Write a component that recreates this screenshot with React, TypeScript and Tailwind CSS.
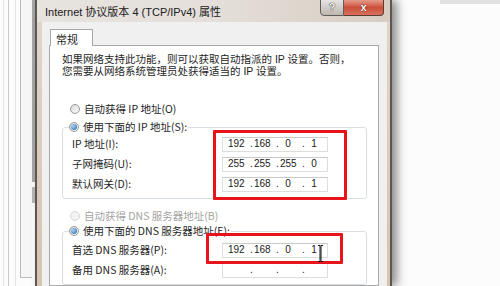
import { Fragment } from "react";

const cjk = "font-['Noto_Sans_CJK_SC',sans-serif]";

function Radio({ checked = false, disabled = false }: { checked?: boolean; disabled?: boolean }) {
  return (
    <span
      className={
        disabled
          ? "w-[10px] h-[10px] rounded-full border border-[#d6d6d6] bg-[#f3f3f3] shrink-0 flex items-center justify-center"
          : "w-[10px] h-[10px] rounded-full border border-[#979797] bg-gradient-to-br from-[#d9d9d9] to-[#fbfbfb] shrink-0 flex items-center justify-center"
      }
    >
      {checked && <span className="w-[6px] h-[6px] rounded-full bg-[radial-gradient(circle_at_35%_35%,#a8d6f7,#1d5ea8)]" />}
    </span>
  );
}

function RadioLabel({ text, checked, disabled }: { text: string; checked?: boolean; disabled?: boolean }) {
  return (
    <div className="h-[14px] flex items-center gap-[4px]">
      <Radio checked={checked} disabled={disabled} />
      <span className={disabled ? "text-[#a3a3a3] whitespace-nowrap" : "whitespace-nowrap"}>{text}</span>
    </div>
  );
}

function IpField({ parts }: { parts: string[] | null }) {
  return (
    <div className="w-[106px] h-[15px] border border-[#dedede] border-t-[#cacaca] bg-white flex items-center pl-[5px] font-['Liberation_Sans',sans-serif] text-[10px] leading-none text-[#222]">
      {[0, 1, 2, 3].map((i) => (
        <Fragment key={i}>
          {i > 0 && <span className="w-[5px] ml-[5px] text-center">.</span>}
          <span className="w-[16px] text-center">{parts ? parts[i] : ""}</span>
        </Fragment>
      ))}
    </div>
  );
}

function Row({ label, parts }: { label: string; parts: string[] | null }) {
  return (
    <div className="h-[20px] flex items-center">
      <span className="w-[150px] whitespace-nowrap">{label}</span>
      <IpField parts={parts} />
    </div>
  );
}

export default function App() {
  return (
    <div className={`w-[500px] h-[286px] overflow-hidden bg-[#fcfcfc] flex relative ${cjk} text-[10.5px] leading-none text-[#1e1e1e]`}>
      {/* window behind, on the left */}
      <div className="w-[35px] h-full flex shrink-0">
        <div className="w-[3px]" />
        <div className="w-[5px] border-l border-[#e3e3e3]" />
        <div className="w-[7px] border-l border-[#c8c8c8]" />
        <div className="w-[5px] border-l border-[#e4e4e4]" />
        <div className="w-[12px] h-[278px] border-l border-b border-[#bcbcbc] bg-[#f6f6f6]" />
        <div className="w-[3px] flex flex-col">
          <div className="h-[182px] bg-[#a9a9a9]" />
          <div className="h-[5px]" />
          <div className="h-[16px] bg-[#b9b9b9]" />
        </div>
      </div>

      {/* dialog */}
      <div className="w-[357px] h-full shrink-0 flex flex-col overflow-hidden border-x-2 border-[#5c5752] bg-gradient-to-b from-[#e0d6cc] to-[#d6c3b0] pl-[5px] pr-[5px] shadow-[5px_0_9px_rgba(0,0,0,0.45)] relative z-10">
        <div className="h-[25px] -ml-[5px] -mr-[5px] flex items-start bg-gradient-to-r from-[#e7e3df] via-[#e4dfda] to-[#d8ccc0]">
          <span className="pl-[8px] pt-[7px] font-['Liberation_Sans','Noto_Sans_CJK_SC',sans-serif] text-[11px] text-[#202020] whitespace-nowrap">
            Internet 协议版本 4 (TCP/IPv4) 属性
          </span>
          <div className="ml-auto mr-[6px] -mt-[1px] flex">
            <div className="w-[24px] h-[17px] rounded-bl-[4px] border border-[#5d5d5d] bg-gradient-to-b from-[#e6e3e0] to-[#bfb7b0] flex items-center justify-center font-['Liberation_Sans',sans-serif] text-[11px] font-bold text-[#f4f4f4] [text-shadow:0_0_1px_#333,0_0_1px_#333]">
              ?
            </div>
            <div className="w-[40px] h-[17px] rounded-br-[4px] border border-l-0 border-[#5d3b35] bg-gradient-to-b from-[#e49b8a] via-[#cc4f3c] to-[#d7705c] flex items-center justify-center font-['Liberation_Sans',sans-serif] text-[11px] font-bold text-white [text-shadow:0_0_1px_#4a1a12,0_0_1px_#4a1a12]">
              x
            </div>
          </div>
        </div>

        <div className="flex-1 bg-[#f0f0f0] pt-[7px] pl-[7px] pr-[6px] flex flex-col shadow-[2px_0_0_#f3eee8]">
          <div className="ml-[1px] w-[43px] h-[17px] -mb-[1px] relative z-10 border border-b-0 border-[#a8a8a8] bg-white pl-[5px] pt-[4px] text-[11px] text-[#1e1e1e]">
            常规
          </div>
          <div className="flex-1 border border-[#a8a8a8] bg-white pl-[12px] flex flex-col">
            <p className="pt-[7px] leading-[12px] whitespace-nowrap font-['Liberation_Sans','Noto_Sans_CJK_SC',sans-serif]">
              如果网络支持此功能，则可以获取自动指派的 IP 设置。否则，
              <br />
              您需要从网络系统管理员处获得适当的 IP 设置。
            </p>

            <div className="mt-[25px] pl-[8px]">
              <RadioLabel text="自动获得 IP 地址(O)" />
            </div>

            <div className="mt-[11px] w-[305px] border border-[#d8dfe4] rounded-[3px] pl-[9px] pb-[4px]">
              <div className="-mt-[8px] -ml-[3px] w-fit bg-white pr-[1px]">
                <RadioLabel text="使用下面的 IP 地址(S):" checked />
              </div>
              <Row label="IP 地址(I):" parts={["192", "168", "0", "1"]} />
              <Row label="子网掩码(U):" parts={["255", "255", "255", "0"]} />
              <Row label="默认网关(D):" parts={["192", "168", "0", "1"]} />
            </div>

            <div className="mt-[10px] pl-[8px]">
              <RadioLabel text="自动获得 DNS 服务器地址(B)" disabled />
            </div>

            <div className="mt-[8px] w-[305px] border border-[#d8dfe4] rounded-[3px] pl-[9px] pb-[4px]">
              <div className="-mt-[8px] -ml-[3px] w-fit bg-white pr-[1px]">
                <RadioLabel text="使用下面的 DNS 服务器地址(E):" checked />
              </div>
              <div className="mt-[2px]">
                <Row label="首选 DNS 服务器(P):" parts={["192", "168", "0", "1"]} />
              </div>
              <Row label="备用 DNS 服务器(A):" parts={null} />
            </div>
          </div>
        </div>
      </div>

      {/* right side */}
      <div className="flex-1">
        <div className="ml-[48px] w-[60px] h-[4px] bg-[#e2e2e2]" />
      </div>

      {/* red annotation boxes */}
      <div className="absolute left-[213px] top-[130px] w-[134px] h-[70px] border-[3px] border-[#e8141c] rounded-[1px] z-20" />
      <div className="absolute left-[206px] top-[233px] w-[137px] h-[31px] border-[3px] border-[#e8141c] rounded-[1px] z-20" />

      {/* text cursor */}
      <svg className="absolute left-[317px] top-[245px] z-20" width="7" height="17" viewBox="0 0 7 17">
        <path d="M1 0.5h2v16H1M6 0.5H4v16h2" fill="none" stroke="#111" strokeWidth="1" />
      </svg>
    </div>
  );
}
